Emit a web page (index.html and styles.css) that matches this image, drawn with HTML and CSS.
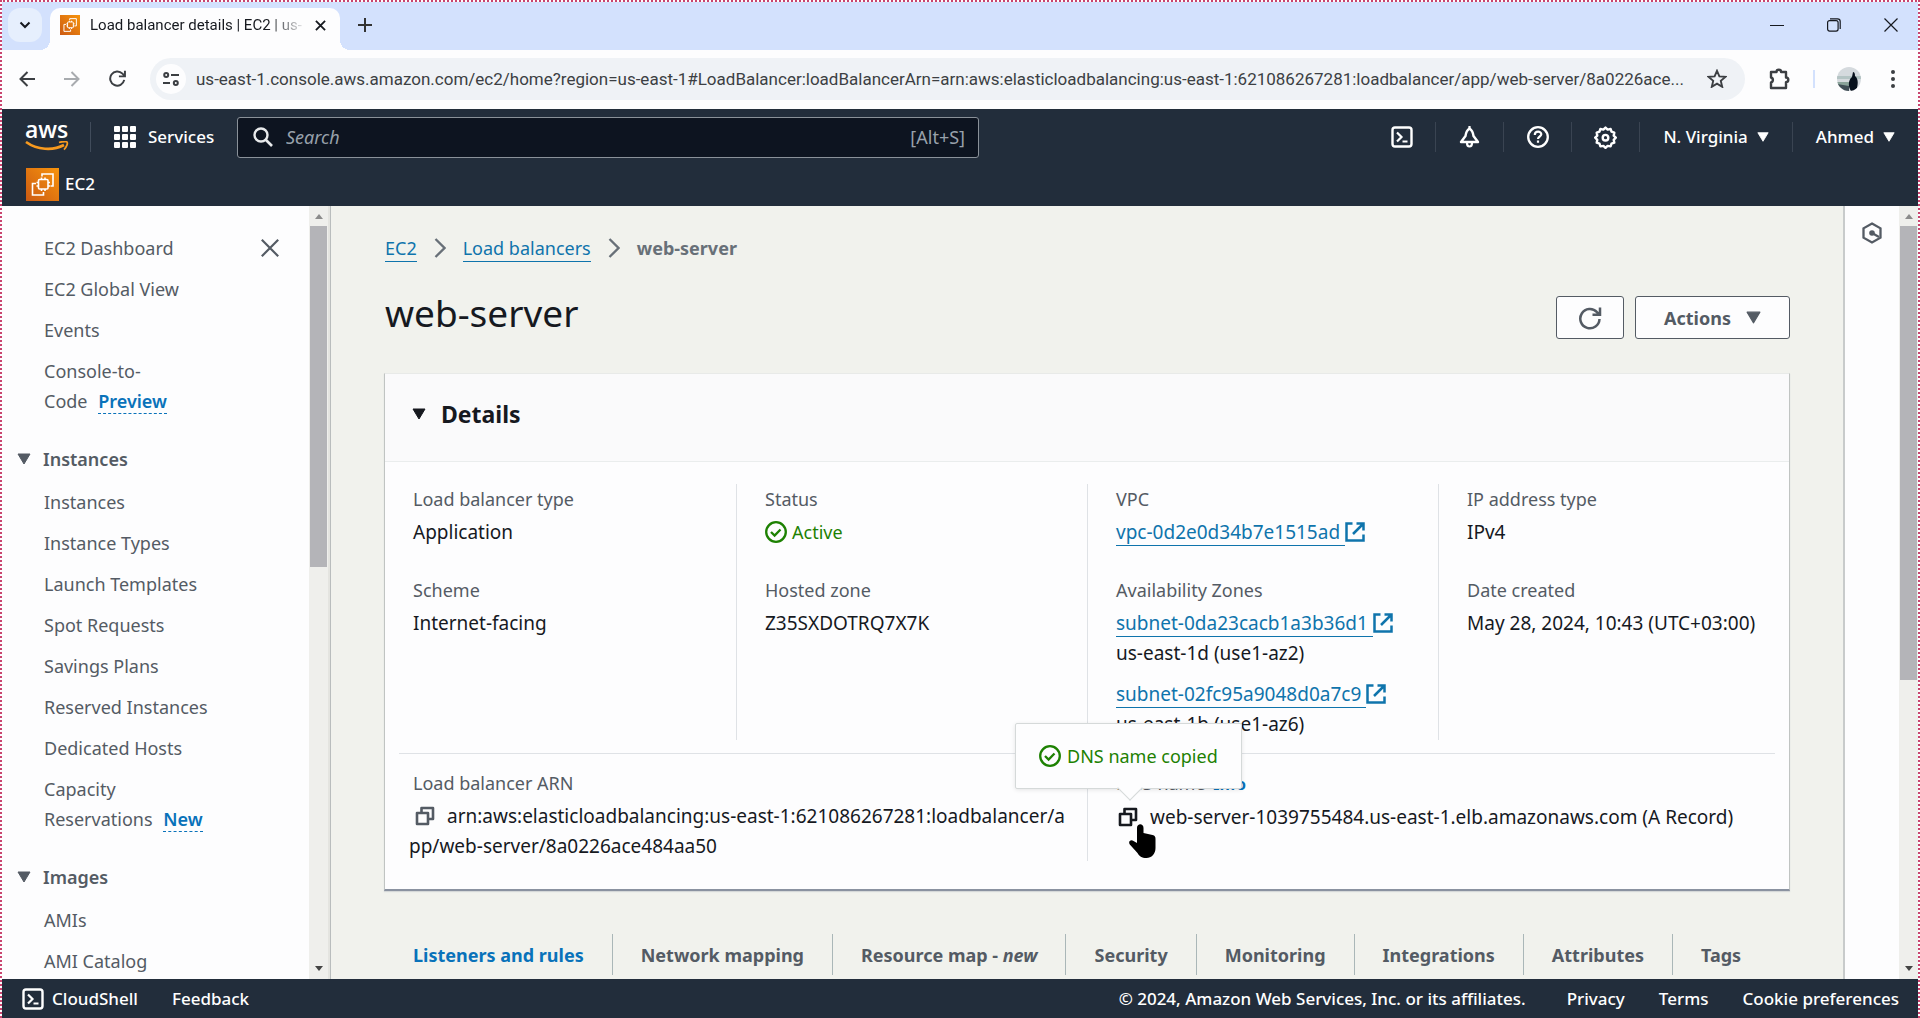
FILE: index.html
```html
<!DOCTYPE html>
<html lang="en">
<head>
<meta charset="utf-8">
<title>Load balancer details | EC2 | us-east-1</title>
<link rel="stylesheet" href="styles.css">
</head>
<body>
<svg class="defs" width="0" height="0" aria-hidden="true">
  <defs>
    <linearGradient id="orange" x1="0" y1="1" x2="1" y2="0"><stop offset="0" stop-color="#cc5a13"/><stop offset="1" stop-color="#f7940c"/></linearGradient>
    <symbol id="ec2" viewBox="0 0 33 33">
      <rect width="33" height="33" fill="url(#orange)"/>
      <g fill="none" stroke="#fff" stroke-width="1.6">
        <rect x="12.500" y="11.500" width="9.500" height="9.500" rx="1"/>
        <path d="M15.500 11.500V9.500M19 11.500V9.500M15.500 21V23M19 21V23M12.500 14.500H10.500M12.500 18H10.500M22 14.500H24M22 18H24M16 8.500V6h11v12h-2.500M10 15.500H6.500V27h11v-3"/>
      </g>
    </symbol>
    <symbol id="shell" viewBox="0 0 22 22"><rect x="1.500" y="1.500" width="19" height="19" rx="2.500" fill="none" stroke="currentColor" stroke-width="2.4"/><path d="M6 6.500l4.500 4.500L6 15.500M11.500 15.500h5" fill="none" stroke="currentColor" stroke-width="2.200"/></symbol>
    <symbol id="down" viewBox="0 0 14 12"><path d="M1 1h12L7 11z" fill="currentColor" stroke="currentColor" stroke-linejoin="round"/></symbol>
    <symbol id="ok" viewBox="0 0 22 22"><circle cx="11" cy="11" r="9.800" fill="none" stroke="currentColor" stroke-width="2.300"/><path d="M6 11l3.600 3.600L15.500 8.500" fill="none" stroke="currentColor" stroke-width="2.300"/></symbol>
    <symbol id="ext" viewBox="0 0 20 20"><path d="M7.500 1.500h-6v17h17v-6M11.500 1.500h7v7M18 2L8 12" fill="none" stroke="currentColor" stroke-width="2.500"/></symbol>
    <symbol id="copy" viewBox="0 0 20 20"><path d="M2 7h11v11H2zM6.500 7V2H18v11h-5" fill="none" stroke="currentColor" stroke-width="2.600" stroke-linejoin="round"/></symbol>
    <symbol id="chev" viewBox="0 0 12 20"><path d="M1.500 1l9 9-9 9" fill="none" stroke="currentColor" stroke-width="2.300"/></symbol>
    <symbol id="reload" viewBox="0 0 24 24"><path d="M21.500 13A9.600 9.600 0 1 1 19 6.200l2 2M22 1.500v7.300h-7.500" fill="none" stroke="currentColor" stroke-width="2.500"/></symbol>
  </defs>
</svg>

<header class="tabstrip">
  <button class="tabsearch" aria-label="Search tabs"><svg width="12" height="8" viewBox="0 0 12 8"><path d="M1.500 1.500L6 6l4.500-4.500" fill="none" stroke="currentColor" stroke-width="2"/></svg></button>
  <div class="tab">
    <svg width="20" height="20"><use href="#ec2"/></svg>
    <span class="tab-title">Load balancer details | EC2 | us-</span>
    <button class="bare" aria-label="Close tab"><svg width="11" height="11" viewBox="0 0 12 12"><path d="M1 1l10 10M11 1L1 11" stroke="currentColor" stroke-width="2"/></svg></button>
  </div>
  <button class="bare newtab" aria-label="New tab"><svg width="14" height="14" viewBox="0 0 14 14"><path d="M7 0v14M0 7h14" stroke="currentColor" stroke-width="2"/></svg></button>
  <div class="winbtns">
    <button class="bare" aria-label="Minimize"><svg width="14" height="14" viewBox="0 0 14 14"><path d="M0 7.500h14" stroke="currentColor" stroke-width="1"/></svg></button>
    <button class="bare" aria-label="Restore"><svg width="14" height="14" viewBox="0 0 14 14"><g fill="none" stroke="currentColor" stroke-width="1.200"><rect x=".6" y="2.600" width="10.500" height="10.500" rx="2"/><path d="M3 .8h7.500a2.700 2.700 0 0 1 2.700 2.700V11"/></g></svg></button>
    <button class="bare" aria-label="Close"><svg width="14" height="14" viewBox="0 0 14 14"><path d="M.5.5l13 13M13.500.5l-13 13" stroke="currentColor" stroke-width="1.200"/></svg></button>
  </div>
</header>

<div class="toolbar">
  <button class="bare" aria-label="Back"><svg width="16" height="16" viewBox="0 0 16 16"><path d="M16 8H2M8.500 1L1.500 8l7 7" fill="none" stroke="currentColor" stroke-width="2"/></svg></button>
  <button class="bare dim" aria-label="Forward"><svg width="16" height="16" viewBox="0 0 16 16"><path d="M0 8h14M7.500 1l7 7-7 7" fill="none" stroke="currentColor" stroke-width="2"/></svg></button>
  <button class="bare" aria-label="Reload"><svg width="17" height="17" viewBox="0 0 24 24"><path d="M21.500 14A10 10 0 1 1 19 5.200l3 3M22.500 1v8H14" fill="none" stroke="currentColor" stroke-width="2.800"/></svg></button>
  <div class="omnibox">
    <button class="siteinfo" aria-label="Site information"><svg width="16" height="14" viewBox="0 0 16 14"><g fill="none" stroke="currentColor" stroke-width="2"><circle cx="3.200" cy="3" r="2"/><path d="M8 3h8M0 11h7"/><circle cx="12.800" cy="11" r="2"/></g></svg></button>
    <input class="url" aria-label="Address" value="us-east-1.console.aws.amazon.com/ec2/home?region=us-east-1#LoadBalancer:loadBalancerArn=arn:aws:elasticloadbalancing:us-east-1:621086267281:loadbalancer/app/web-server/8a0226ace...">
    <button class="bare" aria-label="Bookmark"><svg width="20" height="19" viewBox="0 0 20 19"><path d="M10 1.800l2.400 5.600 6 .5-4.600 4 1.400 5.900L10 14.600l-5.200 3.200 1.400-5.900-4.600-4 6-.5z" fill="none" stroke="currentColor" stroke-width="1.900"/></svg></button>
  </div>
  <button class="bare ext" aria-label="Extensions"><svg width="22" height="22" viewBox="0 0 22 22"><path d="M2 4h5.500a2.300 2.300 0 0 1 4.600 0H17v5.500a2.300 2.300 0 0 1 0 4.600V20H2v-5.500a2.600 2.600 0 0 0 0-5z" fill="none" stroke="currentColor" stroke-width="2.400" stroke-linejoin="round"/></svg></button>
  <span class="bar"></span>
  <svg class="avatar" width="24" height="24" viewBox="0 0 24 24"><clipPath id="round"><circle cx="12" cy="12" r="12"/></clipPath><g clip-path="url(#round)"><path fill="#d5dade" d="M0 0h24v24H0z"/><path fill="#b4c4c4" d="M0 9h24v3H0z"/><path fill="#8aa39a" d="M0 15h14v5H0z"/><path fill="#3f4d55" d="M0 17l12 2v5H0z"/><path fill="#07101c" d="M16 5c2 0 2 3 2 4 4 3 3 10 1 15h-5c-3-4-3-11 1-14z"/></g></svg>
  <button class="bare" aria-label="Menu"><svg width="4" height="18" viewBox="0 0 4 18"><g fill="currentColor"><circle cx="2" cy="2" r="2"/><circle cx="2" cy="9" r="2"/><circle cx="2" cy="16" r="2"/></g></svg></button>
</div>

<nav class="awsnav" aria-label="AWS console">
  <div class="navrow">
    <a href="#" class="logo" aria-label="AWS home"><span>aws</span><svg width="44" height="11" viewBox="0 0 44 11"><path d="M1 1c11 8 27 9 38 3" fill="none" stroke="#f79a1f" stroke-width="2.600"/><path d="M34 1.500c5-1.500 8-1 8-.3 1 1-.5 5-3 7.500" fill="none" stroke="#f79a1f" stroke-width="1.800"/></svg></a>
    <button class="services"><svg width="22" height="22" viewBox="0 0 22 22"><g fill="currentColor"><rect width="6" height="6" rx="1"/><rect x="8" width="6" height="6" rx="1"/><rect x="16" width="6" height="6" rx="1"/><rect y="8" width="6" height="6" rx="1"/><rect x="8" y="8" width="6" height="6" rx="1"/><rect x="16" y="8" width="6" height="6" rx="1"/><rect y="16" width="6" height="6" rx="1"/><rect x="8" y="16" width="6" height="6" rx="1"/><rect x="16" y="16" width="6" height="6" rx="1"/></g></svg>Services</button>
    <label class="search">
      <svg width="20" height="20" viewBox="0 0 20 20"><circle cx="8" cy="8" r="6.500" fill="none" stroke="currentColor" stroke-width="2.400"/><path d="M12.500 12.500L19 19" stroke="currentColor" stroke-width="2.600"/></svg>
      <input type="search" placeholder="Search" aria-label="Search"><span>[Alt+S]</span>
    </label>
    <div class="navtools">
      <button aria-label="CloudShell"><svg width="22" height="22"><use href="#shell"/></svg></button>
      <button aria-label="Notifications"><svg width="23" height="22" viewBox="0 0 23 22"><path d="M11.500 2.500c3 2 3.500 3.500 4 7.500l4.500 6H3l4.500-6c.5-4 1-5.500 4-7.500z" fill="none" stroke="currentColor" stroke-width="2.400" stroke-linejoin="round"/><path d="M11.500 0v3M9 17a2.500 3.500 0 0 0 5 0" fill="none" stroke="currentColor" stroke-width="2.200"/></svg></button>
      <button aria-label="Help"><svg width="22" height="22" viewBox="0 0 22 22"><circle cx="11" cy="11" r="9.800" fill="none" stroke="currentColor" stroke-width="2.300"/><path d="M7.800 9c0-4.500 6.500-4.200 6.500-.7 0 2.200-3.300 2.200-3.300 4.700M11 14.500v2.300" fill="none" stroke="currentColor" stroke-width="2.200"/></svg></button>
      <button aria-label="Settings"><svg width="23" height="23" viewBox="0 0 23 23"><path d="M11.500 1.500l2.100 2.100 3-.6.9 2.700 2.800 1-.6 3 2.100 2-2.100 2.100.6 2.900-2.800 1-.9 2.700-3-.5-2.100 2-2.100-2-3 .5-.9-2.700-2.800-1 .6-2.900-2.100-2.100 2.100-2-.6-3 2.800-1 .9-2.700 3 .6z" fill="none" stroke="currentColor" stroke-width="2.400" stroke-linejoin="round"/><circle cx="11.500" cy="11.700" r="2.800" fill="none" stroke="currentColor" stroke-width="2.400"/></svg></button>
      <button class="word">N. Virginia<svg width="12" height="12"><use href="#down"/></svg></button>
      <button class="word">Ahmed<svg width="12" height="12"><use href="#down"/></svg></button>
    </div>
  </div>
  <a href="#" class="fav"><svg width="33" height="33"><use href="#ec2"/></svg>EC2</a>
</nav>

<div class="work">
  <aside class="side">
    <nav class="sidenav" aria-label="EC2">
      <button class="bare closer" aria-label="Close navigation"><svg width="18" height="18" viewBox="0 0 18 18"><path d="M.8.8l16.400 16.400M17.200.8L.8 17.200" stroke="currentColor" stroke-width="2.200"/></svg></button>
      <ul>
        <li><a href="#">EC2 Dashboard</a></li>
        <li><a href="#">EC2 Global View</a></li>
        <li><a href="#">Events</a></li>
        <li><a href="#">Console-to-<br>Code</a> <a href="#" class="badge">Preview</a></li>
      </ul>
      <button class="sect"><svg width="14" height="12"><use href="#down"/></svg>Instances</button>
      <ul>
        <li><a href="#">Instances</a></li>
        <li><a href="#">Instance Types</a></li>
        <li><a href="#">Launch Templates</a></li>
        <li><a href="#">Spot Requests</a></li>
        <li><a href="#">Savings Plans</a></li>
        <li><a href="#">Reserved Instances</a></li>
        <li><a href="#">Dedicated Hosts</a></li>
        <li><a href="#">Capacity<br>Reservations</a> <a href="#" class="badge">New</a></li>
      </ul>
      <button class="sect"><svg width="14" height="12"><use href="#down"/></svg>Images</button>
      <ul>
        <li><a href="#">AMIs</a></li>
        <li><a href="#">AMI Catalog</a></li>
      </ul>
    </nav>
    <div class="scroll"><i class="up"></i><div class="thumb short"></div><i class="dn"></i></div>
  </aside>

  <main class="content">
    <nav class="crumbs" aria-label="Breadcrumb"><a href="#" class="link">EC2</a><svg width="12" height="20"><use href="#chev"/></svg><a href="#" class="link">Load balancers</a><svg width="12" height="20"><use href="#chev"/></svg><b>web-server</b></nav>
    <div class="titlebar">
      <h1>web-server</h1>
      <button class="btn refresh" aria-label="Refresh"><svg width="24" height="24"><use href="#reload"/></svg></button>
      <button class="btn">Actions<svg width="15" height="13"><use href="#down"/></svg></button>
    </div>
    <section class="card">
      <h2><svg width="14" height="12"><use href="#down"/></svg>Details</h2>
      <div class="grid4">
        <dl><dt>Load balancer type</dt><dd>Application</dd><dt>Scheme</dt><dd>Internet-facing</dd></dl>
        <dl><dt>Status</dt><dd class="ok"><svg width="22" height="22"><use href="#ok"/></svg>Active</dd><dt>Hosted zone</dt><dd>Z35SXDOTRQ7X7K</dd></dl>
        <dl><dt>VPC</dt><dd><a href="#" class="link">vpc-0d2e0d34b7e1515ad </a><svg class="out" width="20" height="20"><use href="#ext"/></svg></dd><dt>Availability Zones</dt><dd><a href="#" class="link">subnet-0da23cacb1a3b36d1 </a><svg class="out" width="20" height="20"><use href="#ext"/></svg><br>us-east-1d (use1-az2)</dd><dd class="more"><a href="#" class="link">subnet-02fc95a9048d0a7c9 </a><svg class="out" width="20" height="20"><use href="#ext"/></svg><br>us-east-1b (use1-az6)</dd></dl>
        <dl><dt>IP address type</dt><dd>IPv4</dd><dt>Date created</dt><dd>May 28, 2024, 10:43 (UTC+03:00)</dd></dl>
      </div>
      <div class="grid2">
        <dl><dt>Load balancer ARN</dt><dd class="arn"><button class="copy" aria-label="Copy ARN"><svg width="20" height="20"><use href="#copy"/></svg></button>arn:aws:elasticloadbalancing:us-east-1:621086267281:loadbalancer/a<wbr>pp/web-server/8a0226ace484aa50</dd></dl>
        <dl><dt>DNS name <a href="#" class="info">Info</a></dt><dd class="dns"><button class="copy active" aria-label="Copy DNS name"><svg width="20" height="20"><use href="#copy"/></svg></button>web-server-1039755484.us-east-1.elb.amazonaws.com (A Record)
          <div class="tip" role="status"><svg width="22" height="22"><use href="#ok"/></svg>DNS name copied</div>
          <svg class="hand" width="27" height="34" viewBox="0 0 27 34"><path d="M8 4c0-5 6.500-5 6.500 0v5l9 2c2.500.6 3 2 3 4v9c0 6-4 10-9 10-5 0-7-1.500-9-5L.8 20.500c-2-3 1-5.500 3.700-3.500L8 19z" fill="#000"/></svg></dd></dl>
      </div>
    </section>
    <nav class="tabs" aria-label="Load balancer"><a href="#" class="on">Listeners and rules</a><a href="#">Network mapping</a><a href="#">Resource map - <i>new</i></a><a href="#">Security</a><a href="#">Monitoring</a><a href="#">Integrations</a><a href="#">Attributes</a><a href="#">Tags</a></nav>
  </main>

  <aside class="rail"><button class="bare" aria-label="Info panel"><svg width="22" height="22" viewBox="0 0 22 22"><path d="M11 1.500l8.500 4.800v9.400L11 20.500l-8.500-4.800V6.300z" fill="none" stroke="currentColor" stroke-width="2.300"/><path d="M11 11l7 4" stroke="currentColor" stroke-width="2.200"/><circle cx="11" cy="11" r="2.800" fill="currentColor"/></svg></button></aside>
  <div class="scroll"><i class="up"></i><div class="thumb long"></div><i class="dn"></i></div>
</div>

<footer class="foot">
  <a href="#" class="cs"><svg width="22" height="22"><use href="#shell"/></svg>CloudShell</a>
  <a href="#">Feedback</a>
  <span class="copyr">© 2024, Amazon Web Services, Inc. or its affiliates.</span>
  <a href="#">Privacy</a><a href="#">Terms</a><a href="#">Cookie preferences</a>
</footer>
</body>
</html>
```
FILE: styles.css
```css
* { box-sizing: border-box; }
body {
  margin: 0;
  height: 100vh;
  display: flex;
  flex-direction: column;
  overflow: hidden;
  border: 2px dotted #c9446f;
  border-bottom: 0;
  background: #fdfdfe;
  color: #16191f;
  font: 18px/30px "Noto Sans", "Open Sans", sans-serif;
}
svg { display: block; flex: none; }
.defs { position: absolute; }
button { font: inherit; color: inherit; cursor: pointer; }
a { color: inherit; text-decoration: none; }
ul, dl, dd { margin: 0; padding: 0; list-style: none; }
.bare { border: 0; background: none; padding: 0; display: flex; align-items: center; }

/* browser frame */
.tabstrip { flex: none; height: 48px; display: flex; align-items: flex-end; background: #d3e1fd; padding-left: 6px; }
.tabsearch { width: 34px; height: 34px; margin-bottom: 8px; border: 0; border-radius: 12px; background: #e6effd; padding: 0; display: grid; place-items: center; }
.tab { position: relative; width: 290px; height: 42px; margin-left: 8px; padding: 0 14px 8px 10px; border-radius: 10px 10px 0 0; background: #fdfdfe; display: flex; align-items: center; font: 15px/20px Roboto, sans-serif; }
.tab::before, .tab::after { content: ""; position: absolute; bottom: 0; width: 10px; height: 10px; }
.tab::before { left: -10px; background: radial-gradient(circle at 0 0, transparent 10px, #fdfdfe 10px); }
.tab::after { right: -10px; background: radial-gradient(circle at 100% 0, transparent 10px, #fdfdfe 10px); }
.tab-title { flex: 1; margin: 0 8px 0 10px; white-space: nowrap; -webkit-mask-image: linear-gradient(90deg, #000 82%, transparent); mask-image: linear-gradient(90deg, #000 82%, transparent); }
.newtab { height: 46px; margin: 0 0 2px 18px; color: #333; }
.winbtns { height: 46px; margin: 0 0 2px auto; display: flex; gap: 43px; padding-right: 20px; }
.toolbar { flex: none; height: 59px; display: flex; align-items: center; padding: 0 23px 2px 17px; color: #3c3f43; }
.toolbar > .bare + .bare { margin-left: 29px; }
.dim { color: #a8abaf; }
.omnibox { flex: 1; min-width: 0; height: 42px; margin: 0 24px; border-radius: 21px; background: #eff2f6; display: flex; align-items: center; padding: 0 18px 0 6px; }
.siteinfo { width: 30px; height: 30px; border: 0; border-radius: 15px; background: #fdfdfe; padding: 0; display: grid; place-items: center; }
.url { flex: 1; min-width: 0; border: 0; outline: 0; background: none; padding: 0; margin: 0 8px 0 10px; color: #3c3f43; font: 17px/30px Roboto, sans-serif; }
.bar { width: 2px; height: 18px; margin: 0 22px; background: #d3e1fd; }
.avatar { margin-right: 30px; }

/* console header */
.awsnav { flex: none; height: 97px; background: #222d3b; color: #fff; font-size: 17px; font-weight: 500; }
.navrow { height: 56px; display: flex; align-items: center; }
.logo { width: 89px; height: 30px; padding-left: 23px; border-right: 1px solid #414c5b; font: 600 23px/14px "Open Sans", sans-serif; }
.logo svg { margin-top: 5px; }
.services { border: 0; background: none; padding: 0; margin-left: 23px; width: 123px; display: flex; align-items: center; gap: 12px; }
.search { width: 742px; height: 41px; border: 1px solid #8a9199; border-radius: 3px; background: #0d1420; display: flex; align-items: center; padding: 0 13px 0 15px; color: #98a1ab; font-size: 18px; font-weight: 400; }
.search svg { color: #e8eaec; }
.search input { flex: 1; margin-left: 13px; border: 0; outline: 0; background: none; padding: 0; font: 18px/30px "Noto Sans", sans-serif; }
.search input::placeholder { color: #98a1ab; font-style: italic; }
.navtools { margin-left: auto; display: flex; height: 30px; }
.navtools button { min-width: 68px; border: 0; border-right: 1px solid #3a4452; background: none; padding: 0; display: flex; align-items: center; justify-content: center; gap: 9px; white-space: nowrap; }
.navtools .word { padding: 0 23px; }
.navtools button:last-child { border-right: 0; }
.fav { display: flex; align-items: center; gap: 6px; width: 120px; height: 38px; padding-left: 24px; }

/* work area */
.work { flex: 1; min-height: 0; display: flex; }
.side { width: 329px; flex: none; display: flex; border-right: 1px solid #b9bdbd; overflow: hidden; color: #545b64; }
.sidenav { flex: 1; position: relative; padding-top: 27px; }
.closer { position: absolute; top: 33px; right: 30px; }
.sidenav ul { display: flex; flex-direction: column; gap: 11px; padding-left: 42px; }
.badge { margin-left: 6px; color: #0972ba; font-weight: 600; border-bottom: 1px dashed #0972ba; }
.sect { border: 0; background: none; padding: 0 0 0 15px; margin: 28px 0 13px; display: flex; align-items: center; gap: 12px; font-weight: 600; }
.scroll { width: 19px; flex: none; background: #efefec; display: flex; flex-direction: column; align-items: center; padding: 8px 1px; }
.side .scroll { width: 21px; border-right: 2px solid #e4e4e0; }
.thumb { width: 17px; background: #b4b4b8; margin-top: 7px; }
.short { height: 45%; }
.long { height: 60%; }
.up, .dn { border: 4px solid transparent; }
.up { border-top: 0; border-bottom: 5px solid #8b8b8b; }
.dn { margin-top: auto; border-bottom: 0; border-top: 5px solid #444; }

.content { flex: 1; min-width: 0; background: #f1f2ed; padding: 27px 53px 0; overflow: hidden; }
.crumbs { display: flex; align-items: center; gap: 17px; padding-left: 1px; color: #687078; }
.link { color: #0f74ac; border-bottom: 1px solid #0f74ac; }
.crumbs .link { line-height: 26px; }
.titlebar { display: flex; align-items: center; gap: 11px; height: 43px; margin: 33px 0 34px; }
h1 { flex: 1; margin: 0; font: 400 37px/43px "Noto Sans", sans-serif; padding: 0 0 10px 1px; }
.btn { height: 43px; padding: 0 28px; border: 1px solid #545b64; border-radius: 3px; background: #fdfdfe; color: #545b64; font-weight: 700; display: flex; align-items: center; gap: 15px; }
.refresh { padding: 0 21px; }
.card { border: 1px solid #c0c4c2; border-top-color: #e8eae8; border-bottom: 2px solid #8a92a0; background: #fdfdfe; box-shadow: 0 1px 1px #d5d8d8; }
h2 { margin: 0; height: 88px; padding: 0 27px 8px; display: flex; align-items: center; gap: 15px; border-bottom: 1px solid #eaeded; background: #fafafb; font: 700 23px/30px "Noto Sans", sans-serif; }
.grid4 { display: grid; grid-template-columns: repeat(4, 1fr); margin-top: 22px; }
.grid4 dl, .grid2 dl { padding-left: 28px; min-width: 0; font-size: 19px; }
.grid4 dl + dl, .grid2 dl + dl { border-left: 1px solid #dfe2e6; }
dt { color: #545b64; margin-bottom: 3px; font-size: 18px; }
dd + dt { margin-top: 28px; }
.more { margin-top: 11px; margin-bottom: 1px; }
.ok { display: flex; align-items: center; gap: 5px; color: #1d8102; font-size: 18px; }
.out { display: inline; vertical-align: -3px; color: #0f74ac; }
.grid2 { display: grid; grid-template-columns: 1fr 1fr; margin: 13px 14px 28px; border-top: 1px solid #dfe2e6; }
.grid2 dl { padding: 14px 0 0 14px; }
.grid2 dl + dl { padding-left: 28px; }
.arn { margin-left: -4px; }
.copy { border: 0; background: none; padding: 0; margin: 0 12px 0 6px; color: #545b64; display: inline-block; vertical-align: -3px; line-height: 20px; }
.dns .copy { margin: 0 12px 0 2px; }
.copy.active { color: #16191f; }
.info { color: #0972ba; font-weight: 700; font-size: 16px; margin-left: 3px; }
.dns { position: relative; white-space: nowrap; }
.tip { position: absolute; left: -101px; bottom: 43px; height: 66px; padding: 0 23px; display: flex; align-items: center; gap: 6px; background: #fdfdfe; border: 1px solid #d5d9d9; border-radius: 2px; color: #1d8102; font-size: 18px; box-shadow: 0 1px 4px #0000001a; z-index: 1; }
.tip::after { content: ""; position: absolute; left: 105px; bottom: -9px; width: 17px; height: 17px; background: inherit; border: solid #d5d9d9; border-width: 0 1px 1px 0; transform: rotate(45deg); }
.hand { position: absolute; left: 13px; top: 22px; z-index: 2; }
.tabs { display: flex; margin-top: 43px; padding-left: 1px; height: 41px; color: #545b64; font-weight: 700; white-space: nowrap; }
.tabs a { padding: 6px 28px; border-left: 1px solid #aab7b8; }
.tabs .on { border-left: 0; color: #0972ba; }
.rail { width: 56px; flex: none; border-left: 2px solid #c8cbcb; padding: 16px 16px; color: #545b64; }

.foot { flex: none; height: 39px; background: #222d3b; color: #fff; display: flex; align-items: center; gap: 34px; padding: 0 19px 0 20px; font-size: 17px; font-weight: 500; white-space: nowrap; }
.cs { display: flex; align-items: center; gap: 8px; }
.copyr { margin-left: auto; margin-right: 7px; }
```
